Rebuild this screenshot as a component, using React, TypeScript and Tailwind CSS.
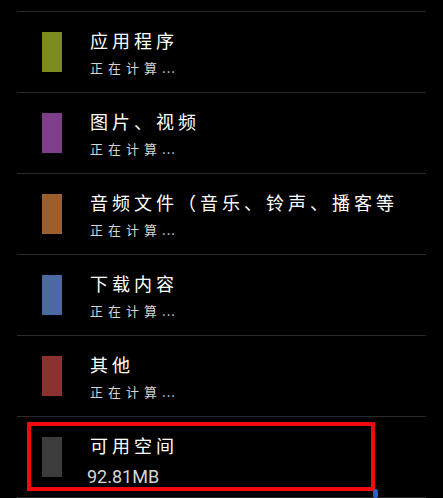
const rows = [
  { title: "应用程序", color: "bg-[#7d8b1f]" },
  { title: "图片、视频", color: "bg-[#7f3e8c]" },
  { title: "音频文件（音乐、铃声、播客等", color: "bg-[#9b5f2e]" },
  { title: "下载内容", color: "bg-[#4c6aa1]" },
  { title: "其他", color: "bg-[#8a3232]" },
];

function Divider() {
  return <div className="mx-[17px] h-px bg-[#2a2a2a]" />;
}

function Row({ title, color, size }: { title: string; color: string; size?: string }) {
  return (
    <>
      <Divider />
      <div className="flex h-[80px] items-center">
        <div className={`ml-[42px] h-[40px] w-[20px] shrink-0 ${color}`} />
        <div className="ml-[28px] flex h-full min-w-0 flex-col pt-[16px]">
          <p className="whitespace-nowrap text-[18px] leading-[24px] tracking-[4px] text-white">{title}</p>
          {size ? (
            <p className="mt-[9px] -ml-[3px] font-['Roboto',sans-serif] text-[18px] leading-[21px] text-[#d6d6d6]">
              {size}
            </p>
          ) : (
            <p className="mt-[6px] text-[13px] leading-[20px] text-[#d4d4d4]">
              <span className="tracking-[5px]">正在计算</span>
              <span className="tracking-[1px]">...</span>
            </p>
          )}
        </div>
      </div>
    </>
  );
}

export default function App() {
  return (
    <div className="relative h-[498px] w-[443px] overflow-hidden bg-black pt-[11px] font-['Noto_Sans_CJK_SC','Noto_Sans',sans-serif]">
      {rows.map((r) => (
        <Row key={r.title} {...r} />
      ))}
      <Row title="可用空间" size="92.81MB" color="bg-[#3c3c3c]" />
      <Divider />

      {/* annotation box */}
      <div className="absolute left-[27px] top-[422px] h-[69px] w-[348px] border-4 border-[#f00a10]" />
      <div className="absolute left-[373px] top-[489px] h-[9px] w-[5px] rounded-sm bg-[#2a5fd0]" />
    </div>
  );
}
